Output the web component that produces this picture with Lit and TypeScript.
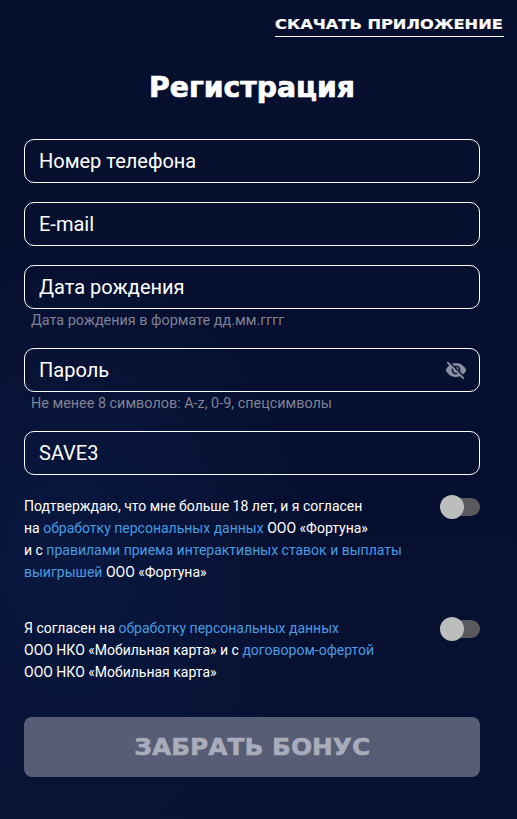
import { LitElement, html, css } from "lit";
import { customElement } from "lit/decorators.js";

@customElement("app-root")
export class AppRoot extends LitElement {
  static styles = css`
    :host {
      display: block;
      width: 517px;
      height: 819px;
      overflow: hidden;
      box-sizing: border-box;
      background:
        radial-gradient(ellipse 240px 300px at 70px 560px, #091840 0%, rgba(9, 24, 64, 0) 100%),
        linear-gradient(180deg, #070f2e 0%, #060f30 60%, #081233 100%);
      font-family: Roboto, "Liberation Sans", sans-serif;
      color: #fff;
    }
    .top {
      display: flex;
      justify-content: flex-end;
      padding: 14px 13px 0 0;
    }
    .dl {
      display: block;
      width: 229px;
      height: 22px;
      border-bottom: 1px solid #fff;
      color: #fff;
      text-decoration: none;
    }
    .wide {
      display: inline-block;
      font-family: "DejaVu Sans", sans-serif;
      font-weight: 700;
      white-space: nowrap;
    }
    .dl .wide {
      font-size: 14.5px;
      line-height: 18px;
      transform: scaleX(1.118);
      transform-origin: left center;
      -webkit-text-stroke: 0.2px #fff;
    }
    .form {
      width: 456px;
      margin-left: 24px;
      display: flex;
      flex-direction: column;
    }
    h1 {
      margin: 35px 0 0;
      height: 32px;
      text-align: center;
      font-weight: 700;
      font-size: 28px;
      line-height: 32px;
    }
    h1 .wide {
      transform: scaleX(1.01);
      -webkit-text-stroke: 0.7px #fff;
    }
    .fields {
      margin-top: 35px;
      display: flex;
      flex-direction: column;
      gap: 19px;
    }
    .field {
      height: 44px;
      box-sizing: border-box;
      border: 1px solid #fff;
      border-radius: 10px;
      padding: 0 14px;
      display: flex;
      align-items: center;
      justify-content: space-between;
      font-size: 20px;
      color: #fff;
    }
    .hint {
      height: 20px;
      line-height: 24px;
      padding-left: 7px;
      font-size: 14.4px;
      color: #7f8294;
    }
    .group { display: flex; flex-direction: column; }
    .eye {
      width: 22px;
      height: 22px;
      margin-right: -2px;
      fill: #8d90a0;
      stroke: #8d90a0;
      stroke-width: 0.4;
      display: block;
    }
    .consent {
      display: flex;
      justify-content: space-between;
      align-items: flex-start;
    }
    .consent p {
      margin: 0;
      font-size: 14px;
      line-height: 22px;
      color: #fff;
      white-space: nowrap;
    }
    .consent a { color: #4a9be0; text-decoration: none; }
    .c1 { margin-top: 20px; }
    .c2 { margin-top: 34px; }
    .toggle {
      position: relative;
      width: 40px;
      height: 18px;
      margin-top: 3px;
      border-radius: 9px;
      background: #5a5a5e;
      flex: none;
    }
    .toggle::before {
      content: "";
      position: absolute;
      left: 0;
      top: -3px;
      width: 24px;
      height: 24px;
      border-radius: 50%;
      background: #bdbdbd;
    }
    .btn {
      margin-top: 34px;
      height: 60px;
      border-radius: 8px;
      background: #575d75;
      color: #a9adbb;
      display: flex;
      align-items: center;
      justify-content: center;
      font-size: 23px;
    }
    .btn .wide {
      transform: scaleX(1.08);
      -webkit-text-stroke: 0.5px #a9adbb;
    }
  `;

  render() {
    return html`
      <div class="top"><a class="dl" href="#"><span class="wide">СКАЧАТЬ ПРИЛОЖЕНИЕ</span></a></div>
      <div class="form">
        <h1><span class="wide">Регистрация</span></h1>
        <div class="fields">
          <div class="field">Номер телефона</div>
          <div class="field">E-mail</div>
          <div class="group">
            <div class="field">Дата рождения</div>
            <div class="hint">Дата рождения в формате дд.мм.гггг</div>
          </div>
          <div class="group">
            <div class="field">
              Пароль
              <svg class="eye" viewBox="0 0 24 24">
                <path d="M12 7c2.76 0 5 2.24 5 5 0 .65-.13 1.26-.36 1.83l2.92 2.92c1.51-1.26 2.7-2.89 3.43-4.75-1.73-4.39-6-7.5-11-7.5-1.4 0-2.74.25-3.98.7l2.16 2.16C10.74 7.13 11.35 7 12 7zM2 4.27l2.28 2.28.46.46C3.08 8.3 1.78 10.02 1 12c1.73 4.39 6 7.5 11 7.5 1.55 0 3.03-.3 4.38-.84l.42.42L19.73 22 21 20.73 3.27 3 2 4.27zM7.53 9.8l1.55 1.55c-.05.21-.08.43-.08.65 0 1.66 1.34 3 3 3 .22 0 .44-.03.65-.08l1.55 1.55c-.67.33-1.41.53-2.2.53-2.76 0-5-2.24-5-5 0-.79.2-1.53.53-2.2zm4.31-.78l3.15 3.15.02-.16c0-1.66-1.34-3-3-3l-.17.01z" />
              </svg>
            </div>
            <div class="hint">Не менее 8 символов: A-z, 0-9, спецсимволы</div>
          </div>
          <div class="field">SAVE3</div>
        </div>
        <div class="consent c1">
          <p>
            Подтверждаю, что мне больше 18 лет, и я согласен<br />
            на <a href="#">обработку персональных данных</a> ООО «Фортуна»<br />
            и с <a href="#">правилами приема интерактивных ставок и выплаты</a><br />
            <a href="#">выигрышей</a> ООО «Фортуна»
          </p>
          <div class="toggle"></div>
        </div>
        <div class="consent c2">
          <p>
            Я согласен на <a href="#">обработку персональных данных</a><br />
            ООО НКО «Мобильная карта» и с <a href="#">договором-офертой</a><br />
            ООО НКО «Мобильная карта»
          </p>
          <div class="toggle"></div>
        </div>
        <div class="btn"><span class="wide">ЗАБРАТЬ БОНУС</span></div>
      </div>
    `;
  }
}
